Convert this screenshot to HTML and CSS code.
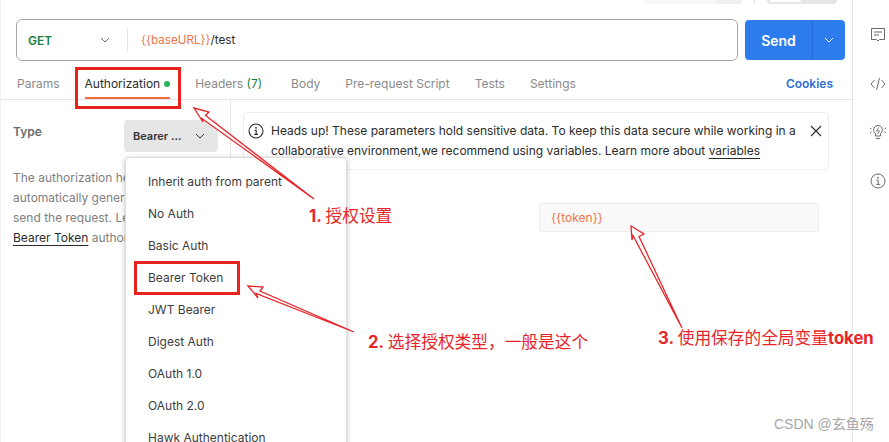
FILE: index.html
```html
<!DOCTYPE html>
<html lang="zh">
<head>
<meta charset="utf-8">
<title>Authorization</title>
<link rel="stylesheet" href="styles.css">
</head>
<body>
<div class="app">
  <main class="main">
    <div class="topbar">
      <div class="top-save"><span class="top-save-main"></span><span class="top-save-more"></span></div>
      <span class="top-sep"></span>
      <div class="top-toggle"><span class="top-toggle-on"></span></div>
    </div>
    <div class="request">
      <div class="urlbar">
        <div class="method"><span class="method-name">GET</span>
          <svg class="chev" width="12" height="12" viewBox="0 0 12 12"><path d="M2 4l4 4 4-4" fill="none" stroke="#6b6b6b" stroke-width="1"/></svg>
        </div>
        <div class="url"><span class="var">{{baseURL}}</span>/test</div>
      </div>
      <div class="send"><span class="send-label">Send</span><span class="send-more">
        <svg width="12" height="12" viewBox="0 0 12 12"><path d="M2 4l4 4 4-4" fill="none" stroke="#fff" stroke-width="1"/></svg></span></div>
    </div>
    <nav class="tabs">
      <span class="tab">Params</span>
      <span class="tab tab-active">Authorization<i class="dot"></i></span>
      <span class="tab tab-headers">Headers <b class="count">(7)</b></span>
      <span class="tab">Body</span>
      <span class="tab">Pre-request Script</span>
      <span class="tab">Tests</span>
      <span class="tab">Settings</span>
      <span class="cookies">Cookies</span>
    </nav>
    <div class="content">
      <section class="auth-left">
        <div class="type-row">
          <span class="type-label">Type</span>
          <div class="select"><span>Bearer ...</span>
            <svg width="12" height="12" viewBox="0 0 12 12"><path d="M2 4l4 4 4-4" fill="none" stroke="#333" stroke-width="1"/></svg>
          </div>
        </div>
        <p class="desc">The authorization header will be<br>automatically generated when you<br>send the request. Learn more about<br><a class="link">Bearer Token</a> authorization.</p>
      </section>
      <section class="auth-right">
        <div class="alert">
          <svg class="alert-icon" width="16" height="16" viewBox="0 0 16 16"><circle cx="8" cy="8" r="7" fill="none" stroke="#2b2b2b" stroke-width="1.1"/><circle cx="8" cy="4.8" r=".9" fill="#2b2b2b"/><path d="M6.4 7.2H8.200V11.400M6.200 11.400H10" fill="none" stroke="#2b2b2b" stroke-width="1.1"/></svg>
          <p class="alert-text">Heads up! These parameters hold sensitive data. To keep this data secure while working in a collaborative environment,we recommend using variables. Learn more about <a class="link">variables</a></p>
          <svg class="alert-close" width="12" height="12" viewBox="0 0 12 12"><path d="M1 1l10 10M11 1L1 11" fill="none" stroke="#2b2b2b" stroke-width="1.1"/></svg>
        </div>
        <div class="token-row"><div class="token"><span class="var">{{token}}</span></div></div>
      </section>
    </div>
  </main>
  <aside class="sidebar">
    <svg width="16" height="16" viewBox="0 0 16 16"><path d="M1.500 1.500h13v11H9.500L8 14l-1.500-1.500H1.500z" fill="none" stroke="#6b6b6b" stroke-width="1"/><path d="M4 5h8M4 8h5" stroke="#6b6b6b" stroke-width="1"/></svg>
    <svg width="16" height="16" viewBox="0 0 16 16"><path d="M4.500 4L1 8l3.500 4M11.500 4L15 8l-3.500 4M9.500 2L6.500 14" fill="none" stroke="#6b6b6b" stroke-width="1"/></svg>
    <svg width="16" height="16" viewBox="0 0 16 16"><path d="M8 1.500a4.500 4.500 0 0 1 2.500 8.200V12h-5V9.700A4.500 4.500 0 0 1 8 1.500zM6 14.500h4M0 4l1.500 1M0 9l1.500-1M16 4l-1.500 1M16 9l-1.500-1" fill="none" stroke="#6b6b6b" stroke-width="1"/><path d="M8.500 3.500L6.500 7h3l-2 3" fill="none" stroke="#6b6b6b" stroke-width=".9"/></svg>
    <svg width="16" height="16" viewBox="0 0 16 16"><circle cx="8" cy="8" r="7" fill="none" stroke="#6b6b6b" stroke-width="1"/><circle cx="8" cy="4.800" r=".9" fill="#6b6b6b"/><path d="M6.400 7.200H8.200V11.400M6.200 11.400H10" fill="none" stroke="#6b6b6b" stroke-width="1"/></svg>
  </aside>
</div>

<ul class="menu">
  <li>Inherit auth from parent</li>
  <li>No Auth</li>
  <li>Basic Auth</li>
  <li>Bearer Token</li>
  <li>JWT Bearer</li>
  <li>Digest Auth</li>
  <li>OAuth 1.0</li>
  <li>OAuth 2.0</li>
  <li>Hawk Authentication</li>
</ul>

<span class="mark mark-tab"></span>
<span class="mark mark-item"></span>

<svg class="arrows" width="889" height="442" viewBox="0 0 889 442">
  <path class="arrow" d="M194 108L209 112 205.500 115.500 314 199 202 118.500 203 122Z"/>
  <path class="arrow" d="M248 286L263 287 260 291 354 332 256 293.500 258 298Z"/>
  <path class="arrow" d="M631 226L644 234 639 236.500 682 328 633 235.500 632 240Z"/>
</svg>

<span class="note note-1"><b>1.</b> 授权设置</span>
<span class="note note-2"><b>2.</b> 选择授权类型，一般是这个</span>
<span class="note note-3"><b>3.</b> 使用保存的全局变量<b>token</b></span>
<span class="watermark">CSDN @玄鱼殇</span>
</body>
</html>
```

FILE: styles.css
```css
* { box-sizing: border-box; }
html, body { margin: 0; padding: 0; }
body {
  position: relative;
  width: 889px;
  height: 442px;
  overflow: hidden;
  background: #fff;
  font-family: Inter, "Noto Sans CJK SC", sans-serif;
  font-size: 12px;
  color: #2b2b2b;
}
p, ul { margin: 0; padding: 0; }
.app { display: flex; height: 442px; border-left: 1px solid #f2f2f2; }
.main { width: 852px; border-right: 1px solid #e6e6e6; display: flex; flex-direction: column; }
.sidebar {
  flex: 1;
  display: flex;
  flex-direction: column;
  align-items: center;
  gap: 32.500px;
  padding: 27px 0 0 14px;
}

.topbar { height: 19px; display: flex; align-items: flex-start; padding-left: 642px; }
.top-save { display: flex; width: 99px; height: 4px; }
.top-save-main { flex: 1; background: #f7f7f7; border-radius: 0 0 0 3px; }
.top-save-more { width: 24px; background: #f0f0f0; border-radius: 0 0 3px 0; }
.top-sep { width: 1px; height: 4px; background: #e0e0e0; margin-left: 12px; }
.top-toggle { width: 70px; height: 4px; margin-left: 12px; background: #e6e6e6; border-radius: 0 0 4px 4px; padding-left: 3px; }
.top-toggle-on { display: block; width: 31px; height: 2px; background: #fff; border-radius: 0 0 3px 3px; }

.request { display: flex; padding-left: 15px; gap: 7px; height: 42px; }
.urlbar {
  width: 722px;
  display: flex;
  align-items: center;
  border: 1px solid #a6a6a6;
  border-radius: 6px;
  height: 42px;
}
.method { width: 111px; height: 24px; display: flex; align-items: center; justify-content: space-between; padding: 0 16px 0 11px; border-right: 1px solid #e6e6e6; }
.method-name { color: #1a7f45; font-weight: 600; font-size: 12px; }
.url { padding-left: 13px; font-size: 11.700px; }
.var { color: #f0744a; }
.send {
  width: 100px;
  height: 40px;
  margin-top: 1px;
  display: flex;
  background: #2d7cee;
  border-radius: 4px;
  color: #fff;
  font-weight: 600;
  font-size: 14px;
  align-items: center;
}
.send-label { width: 67px; text-align: center; }
.send-more { flex: 1; height: 40px; display: flex; align-items: center; justify-content: center; border-left: 1px solid #256cd6; }

.tabs {
  display: flex;
  align-items: flex-end;
  height: 39px;
  padding-left: 16px;
  border-bottom: 1px solid #e6e6e6;
  color: #8a8a8a;
}
.tab { margin-right: 25px; line-height: 16px; padding-bottom: 7px; position: relative; white-space: nowrap; }
.tab-headers { margin-right: 29px; }
.tab-active { color: #2b2b2b; }
.tab-active::after {
  content: "";
  position: absolute;
  left: 0;
  right: 0;
  bottom: 0;
  height: 2px;
  background: #f26b3a;
}
.dot { display: inline-block; width: 6px; height: 6px; border-radius: 50%; background: #26b35a; margin-left: 4px; vertical-align: 1px; }
.count { font-weight: 400; color: #1a7f45; }
.cookies { margin-left: auto; margin-right: 19px; color: #2d6fd6; font-weight: 600; line-height: 16px; padding-bottom: 7px; }

.content { display: flex; flex: 1; min-width: 0; }
.auth-left { width: 230px; flex: none; border-right: 1px solid #e6e6e6; padding: 20px 12px 0; }
.type-row { display: flex; align-items: flex-start; justify-content: space-between; }
.type-label { font-weight: 600; color: #6b6b6b; line-height: 24px; }
.select {
  width: 94px;
  height: 32px;
  background: #e6e6e6;
  border-radius: 4px;
  display: flex;
  align-items: center;
  justify-content: space-between;
  padding: 0 12px 0 9px;
  font-size: 11px;
  font-weight: 600;
  color: #333;
}
.desc { width: 112px; margin-top: 16px; line-height: 20px; color: #808080; white-space: nowrap; overflow: hidden; }
.link { color: #2b2b2b; text-decoration: underline; text-underline-offset: 3px; }
.auth-right { flex: 1; min-width: 0; padding: 12px 23px 0 12px; }
.alert {
  display: flex;
  align-items: flex-start;
  height: 58px;
  border: 1px solid #ededed;
  border-radius: 4px;
  padding: 8px 0 0 4px;
}
.alert-icon { margin-top: 2px; flex: none; }
.alert-text { margin-left: 7px; line-height: 20px; width: 532px; flex: none; }
.alert-close { margin-left: 7px; margin-top: 4px; flex: none; }
.token-row { display: flex; justify-content: flex-end; padding: 33px 10px 0 0; }
.token {
  width: 280px;
  height: 29px;
  background: #f9f9f9;
  border: 1px solid #ededed;
  border-radius: 3px;
  padding-left: 11px;
  line-height: 27px;
}

.menu {
  position: absolute;
  left: 125px;
  top: 157px;
  width: 222px;
  height: 300px;
  list-style: none;
  background: #fff;
  border: 1px solid #dedede;
  border-radius: 4px;
  box-shadow: 0 1px 5px rgba(0, 0, 0, .25);
  padding-top: 8px;
}
.menu li { height: 32px; line-height: 32px; padding-left: 22px; color: #3d3d3d; }

.mark { position: absolute; border: 3px solid #e8231d; }
.mark-tab { left: 75px; top: 67px; width: 106px; height: 42px; }
.mark-item { left: 134px; top: 261px; width: 106px; height: 34px; }

.arrows { position: absolute; left: 0; top: 0; pointer-events: none; }
.arrow { fill: #fff; stroke: #e8262a; stroke-width: 1.300; stroke-linejoin: miter; }

.note { position: absolute; font-size: 16.700px; line-height: 20px; color: #e8262a; white-space: nowrap; font-family: "Noto Sans CJK SC", Inter, sans-serif; }
.note b { font-family: Inter, sans-serif; font-weight: 700; }
.note-1 { left: 309px; top: 205px; }
.note-2 { left: 368px; top: 331px; }
.note-3 { left: 658px; top: 327px; }
.watermark { position: absolute; left: 774px; top: 415px; font-size: 14px; line-height: 18px; color: #a6a6a6; white-space: nowrap; font-family: "Liberation Sans", "Noto Sans CJK SC", sans-serif; }
```
